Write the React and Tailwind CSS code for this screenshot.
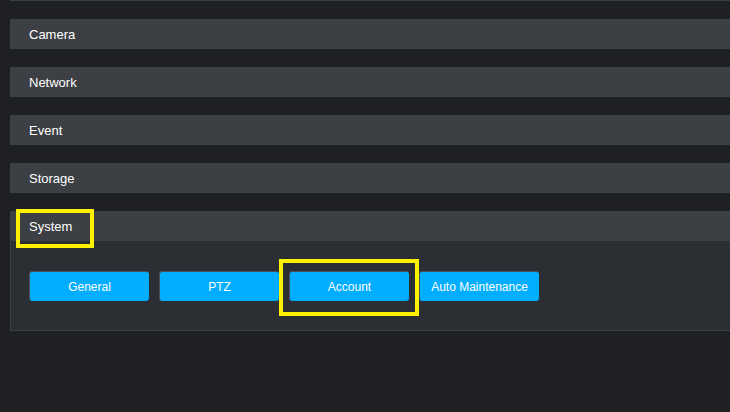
import React from 'react'

const sections = ['Camera', 'Network', 'Event', 'Storage']
const buttons = ['General', 'PTZ', 'Account', 'Auto Maintenance']

function Header({ label, highlight }) {
  return (
    <div className="flex h-[30px] items-center bg-[#3c3f44] pl-[19px] pt-[2px] text-[13px] text-white">
      {highlight ? (
        <span className="-ml-[13px] mt-[3px] flex h-[39px] w-[78px] items-center border-4 border-[#fff200] pb-[4px] pl-[9px]">{label}</span>
      ) : (
        label
      )}
    </div>
  )
}

export default function App() {
  return (
    <div className="h-[412px] w-[730px] overflow-hidden bg-[#1f2023] pl-[10px]" style={{ fontFamily: '"Liberation Sans", Arial, sans-serif' }}>
      <div className="w-[740px]">
        <div className="h-px bg-[#3a3d42]" />
        {sections.map((s) => (
          <div key={s} className="mt-[18px]">
            <Header label={s} />
          </div>
        ))}
        <div className="mt-[18px]">
          <Header label="System" highlight />
          <div className="flex h-[90px] gap-[10px] border-b border-l border-[#3d4046] bg-[#2b2e33] pl-[18px] pt-[30px]">
            {buttons.map((b) => {
              const btn = (
                <button className="flex h-[30px] w-[120px] items-center justify-center rounded-[3px] border-l border-t border-[#4a5058] bg-[#00adff] pt-px text-[12px] text-white">
                  {b}
                </button>
              )
              return b === 'Account' ? (
                <div key={b} className="-mx-[10px] -mt-[12px] h-[57px] border-4 border-[#fff200] px-[6px] pt-[8px]">
                  {btn}
                </div>
              ) : (
                <div key={b}>{btn}</div>
              )
            })}
          </div>
        </div>
      </div>
    </div>
  )
}
